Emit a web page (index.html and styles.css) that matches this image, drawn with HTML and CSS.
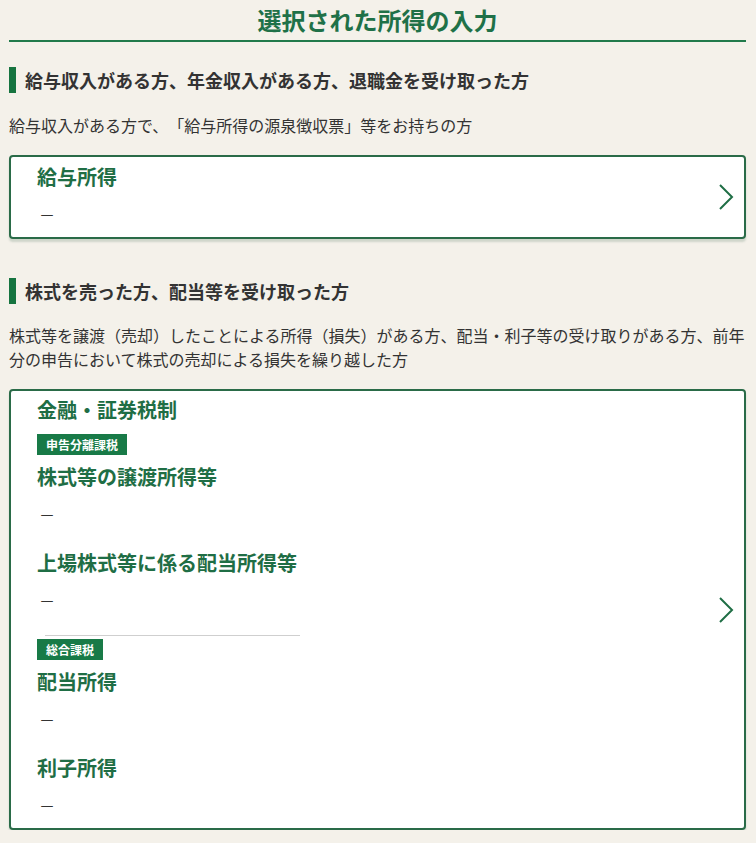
FILE: index.html
```html
<!DOCTYPE html>
<html lang="ja">
<head>
    <meta charset="UTF-8">
    <meta name="viewport" content="width=device-width, initial-scale=1.0">
    <title>選択された所得の入力</title>
    <link rel="stylesheet" href="styles.css">
</head>
<body>
    <div class="container">
        <h1 class="page-title">選択された所得の入力</h1>

        <section class="section">
            <h2 class="section-title">給与収入がある方、年金収入がある方、退職金を受け取った方</h2>
            <p class="section-desc">給与収入がある方で、「給与所得の源泉徴収票」等をお持ちの方</p>
            <a class="card" href="#">
                <div class="card-body">
                    <div class="item item-first">
                        <div class="item-title">給与所得</div>
                        <div class="item-value">－</div>
                    </div>
                </div>
                <svg class="chevron" width="16" height="26" viewBox="0 0 16 26">
                    <path d="M2 1 L14 13 L2 25" fill="none" stroke="#1f6e45" stroke-width="2"/>
                </svg>
            </a>
        </section>

        <section class="section">
            <h2 class="section-title">株式を売った方、配当等を受け取った方</h2>
            <p class="section-desc">株式等を譲渡（売却）したことによる所得（損失）がある方、配当・利子等の受け取りがある方、前年分の申告において株式の売却による損失を繰り越した方</p>
            <a class="card" href="#">
                <div class="card-body">
                    <div class="group-title">金融・証券税制</div>
                    <span class="badge">申告分離課税</span>
                    <div class="item item-first">
                        <div class="item-title">株式等の譲渡所得等</div>
                        <div class="item-value">－</div>
                    </div>
                    <div class="item">
                        <div class="item-title">上場株式等に係る配当所得等</div>
                        <div class="item-value">－</div>
                    </div>
                    <div class="divider"></div>
                    <span class="badge badge-after-divider">総合課税</span>
                    <div class="item item-first">
                        <div class="item-title">配当所得</div>
                        <div class="item-value">－</div>
                    </div>
                    <div class="item">
                        <div class="item-title">利子所得</div>
                        <div class="item-value">－</div>
                    </div>
                </div>
                <svg class="chevron" width="16" height="26" viewBox="0 0 16 26">
                    <path d="M2 1 L14 13 L2 25" fill="none" stroke="#1f6e45" stroke-width="2"/>
                </svg>
            </a>
        </section>
    </div>
</body>
</html>
```

FILE: styles.css
```css
body {
    margin: 0;
    padding: 0;
    background: #f4f1ea;
    color: #333;
    font-family: "Noto Sans CJK JP", "Noto Sans", sans-serif;
    text-spacing-trim: space-all;
}

.container {
    padding: 0 10px 0 9px;
}

.page-title {
    margin: 0;
    padding: 4px 0 4px;
    font-size: 24px;
    line-height: 32px;
    font-weight: bold;
    text-align: center;
    color: #1f7148;
    border-bottom: 2px solid #217a4b;
}

.section-title {
    margin: 25px 0 0;
    height: 26px;
    padding-left: 9px;
    border-left: 7px solid #167440;
    font-size: 18px;
    line-height: 26px;
    font-weight: bold;
    color: #333;
}

.section-desc {
    margin: 20px 0 0;
    font-size: 16px;
    line-height: 24px;
    color: #333;
}

.section:nth-child(3) .section-title {
    margin-top: 39px;
}

.section:nth-child(3) .section-desc {
    margin-top: 19px;
}

.card {
    display: flex;
    align-items: center;
    margin-top: 18px;
    background: #fff;
    border: 2px solid #2a6b48;
    border-radius: 4px;
    box-shadow: 0 3px 2px rgba(40, 90, 60, 0.18);
    text-decoration: none;
    color: inherit;
}

.card-body {
    flex: 1;
    padding: 5px 26px 11px;
}

.chevron {
    flex: none;
    margin-right: 10px;
}

.group-title {
    margin-top: 1px;
    font-size: 20px;
    line-height: 26px;
    font-weight: bold;
    color: #1f6e45;
}

.badge {
    display: inline-block;
    margin-top: 11px;
    padding: 0 9px;
    height: 21px;
    line-height: 21px;
    font-size: 12px;
    font-weight: bold;
    color: #fff;
    background: #187a47;
}

.badge-after-divider {
    margin-top: 1px;
}

.item {
    margin-top: 22px;
}

.item-first {
    margin-top: 7px;
}

.card-body > .item-first:first-child {
    margin-top: 0;
}

.item-title {
    font-size: 20px;
    line-height: 30px;
    font-weight: bold;
    color: #1f6e45;
}

.item-value {
    margin-top: 10px;
    padding-left: 2px;
    font-size: 16px;
    line-height: 24px;
    color: #333;
}

.divider {
    margin: 23px 0 0 8px;
    width: 255px;
    height: 1px;
    background: #cfcfcf;
}
```
